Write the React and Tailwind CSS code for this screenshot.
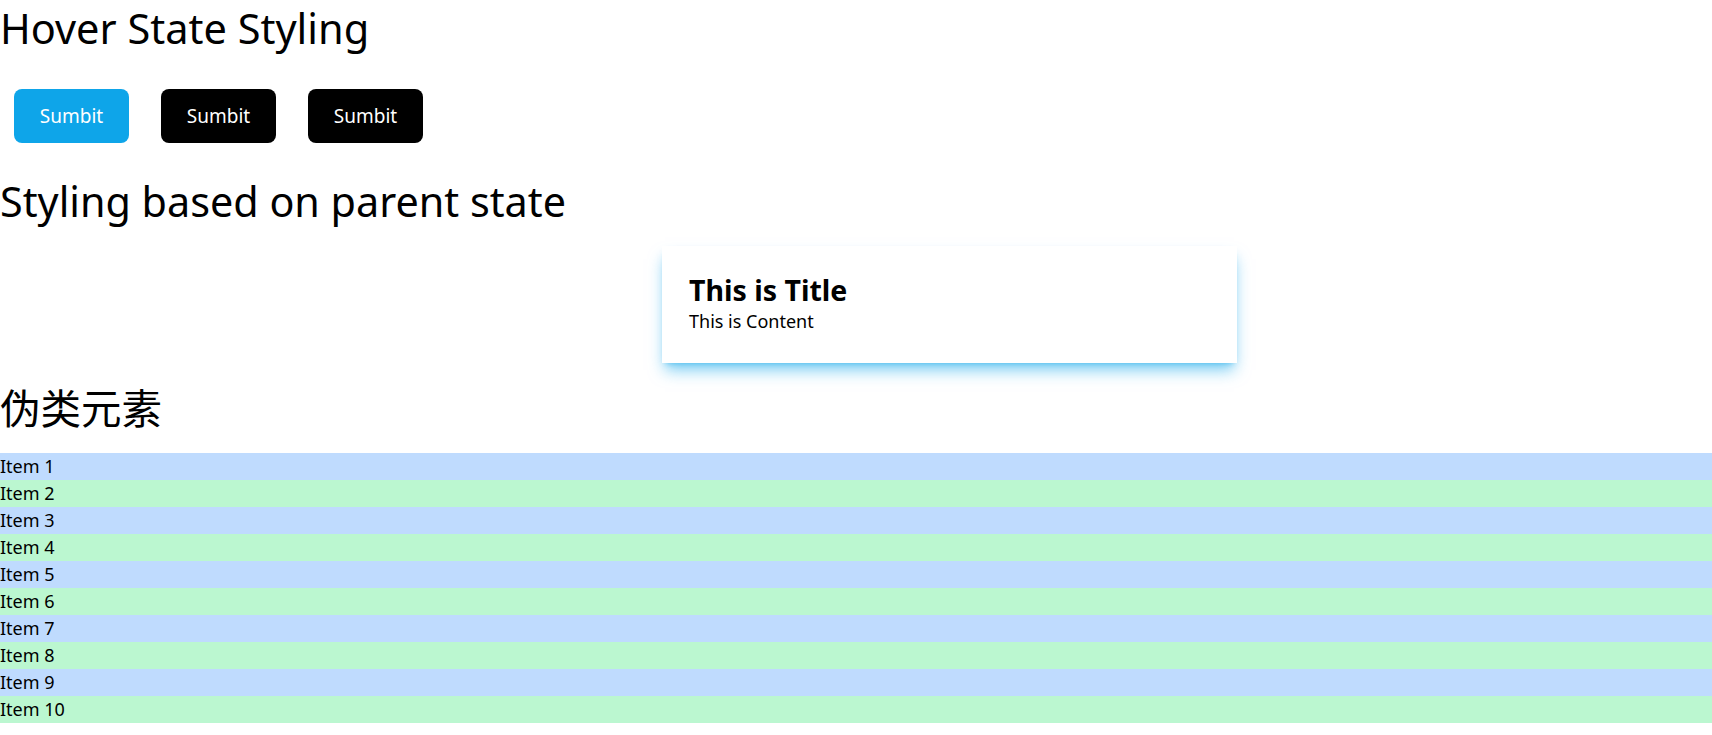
export default function App() {
  const items = Array.from({ length: 10 }, (_, i) => `Item ${i + 1}`);
  return (
    <div className="font-['Noto_Sans','Noto_Sans_CJK_SC',sans-serif] text-black bg-white min-h-screen">
      <h1 className="text-[41.5px] leading-[56px]">Hover State Styling</h1>
      <div className="flex gap-8 pl-[14px] pt-[33px]">
        {["bg-[#0ea5e9]", "bg-black", "bg-black"].map((c, i) => (
          <button
            key={i}
            className={`${c} text-white w-[115px] h-[54px] rounded-lg text-[19px]`}
          >
            Sumbit
          </button>
        ))}
      </div>
      <h2 className="text-[41.3px] leading-[56px] mt-[30px]">Styling based on parent state</h2>
      <div className="mt-[17px] ml-[662px] w-[575px] h-[117px] bg-white px-[27px] pt-[26px] shadow-[0_10px_15px_-3px_rgba(14,165,233,0.55),0_4px_6px_-4px_rgba(14,165,233,0.55)]">
        <h3 className="text-[28.5px] font-bold leading-[36px]">This is Title</h3>
        <p className="text-[18px] leading-[27px]">This is Content</p>
      </div>
      <h2 className="text-[40.5px] leading-[54px] mt-[19px]">伪类元素</h2>
      <ul className="mt-[17px]">
        {items.map((t, i) => (
          <li
            key={t}
            className={`${i % 2 === 0 ? "bg-[#bfdbfe]" : "bg-[#bbf7d0]"} text-[18px] leading-[27px] h-[27px]`}
          >
            {t}
          </li>
        ))}
      </ul>
    </div>
  );
}
